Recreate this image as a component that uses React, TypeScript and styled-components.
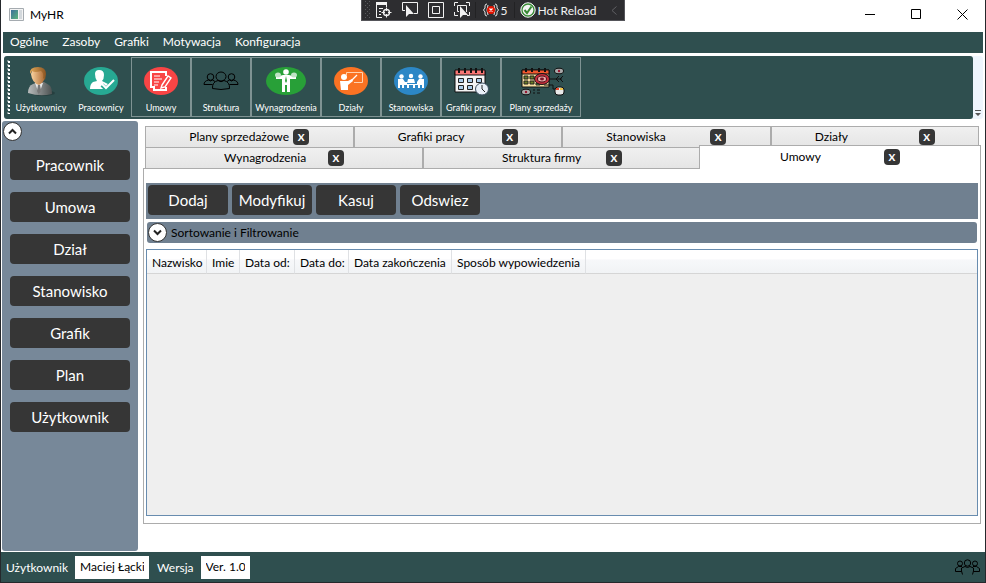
import React, { useState } from "react";
import styled, { createGlobalStyle } from "styled-components";

const slate = "#2f4f4f";
const steel = "#708090";
const dark = "#363636";
const line = "#acacac";

const GlobalStyle = createGlobalStyle`
  *, *::before, *::after { box-sizing: border-box; }
  body { margin: 0; background: #fff; }
  body, button, input { font-family: Lato, "Open Sans", sans-serif; font-size: 12px; color: #000; }
  button { padding: 0; border: 0; background: none; cursor: pointer; }
  svg { display: block; flex: none; }
`;

const Window = styled.div`
  position: relative;
  display: flex;
  flex-direction: column;
  min-height: 100vh;
  border: solid #25282c;
  border-width: 0 1px 1px;
`;

const TitleBar = styled.header`
  display: flex;
  align-items: center;
  height: 28px;
  margin-bottom: 4px;
  padding-left: 8px;
`;

const Title = styled.h1`
  flex: 1;
  margin: 0 0 0 6px;
  font-size: 12px;
  font-weight: 400;
`;

const CaptionButton = styled.button`
  display: grid;
  place-items: center;
  width: 46px;
  height: 28px;
`;

const DebugBar = styled.div`
  position: absolute;
  top: 0;
  left: 50%;
  transform: translateX(-50%);
  display: flex;
  align-items: center;
  width: 264px;
  height: 21px;
  padding: 0 6px 0 3px;
  background: #2d2d30;
  border: solid #55555a;
  border-width: 0 1px 1px;
`;

const DebugButton = styled.button<{ $width: number }>`
  display: flex;
  align-items: center;
  justify-content: center;
  gap: 2px;
  width: ${(p) => p.$width}px;
  height: 20px;
  color: #f1f1f1;
  white-space: nowrap;
`;

const DebugSeparator = styled.span`
  width: 1px;
  height: 16px;
  background: #222224;
`;

const MenuBar = styled.nav`
  display: flex;
  align-items: center;
  height: 21px;
  margin: 0 2px 3px;
  background: ${slate};
`;

const MenuItem = styled.button`
  height: 21px;
  padding: 0 7px 2px;
  color: #fff;
`;

const ToolStrip = styled.div`
  display: flex;
  height: 63px;
  margin: 0 2px 2px 3px;
  background: #eef5fd;
  border-radius: 3px;
`;

const ToolBar = styled.div`
  display: flex;
  align-items: flex-start;
  flex: 1;
  padding: 1px 0 0 3px;
  background: ${slate};
  border-radius: 3px;
`;

const Grip = styled.span`
  width: 4px;
  height: 54px;
  margin-top: 3px;
  background: repeating-linear-gradient(#fff 0 2px, transparent 2px 4px) 1px 1px / 2px 100% no-repeat,
    repeating-linear-gradient(#7d8f8f 0 2px, transparent 2px 4px) 0 0 / 2px 100% no-repeat;
`;

const ToolButton = styled.button<{ $wide?: number; $framed?: boolean }>`
  display: flex;
  flex-direction: column;
  align-items: center;
  justify-content: space-between;
  width: ${(p) => p.$wide ?? 60}px;
  height: 60px;
  padding: 9px 0 2px;
  border: 1px solid ${(p) => (p.$framed ? "#7f9393" : "transparent")};
  color: #fff;
  font-size: 9px;
  line-height: 12px;
  white-space: nowrap;
`;

const Overflow = styled.button`
  display: flex;
  align-items: flex-end;
  justify-content: center;
  width: 10px;
  padding-bottom: 2px;
`;

const Main = styled.main`
  display: flex;
  flex: 1;
  gap: 5px;
  padding: 0 4px 1px 1px;
`;

const SideBar = styled.aside`
  width: 136px;
  padding: 1px 8px;
  background: #778899;
  border-radius: 3px;
`;

const RoundButton = styled.button<{ $out?: boolean }>`
  display: grid;
  place-items: center;
  flex: none;
  width: 19px;
  height: 19px;
  margin-left: ${(p) => (p.$out ? "-7px" : "0")};
  background: #fff;
  border: 1px solid #333;
  border-radius: 50%;
`;

const SideList = styled.div`
  display: flex;
  flex-direction: column;
  gap: 12px;
  padding-top: 9px;
`;

const DarkButton = styled.button<{ $width?: number }>`
  width: ${(p) => (p.$width ? `${p.$width}px` : "100%")};
  height: 30px;
  background: ${dark};
  border-radius: 4px;
  color: #fff;
  font-size: 15px;
`;

const Content = styled.section`
  display: flex;
  flex: 1;
  flex-direction: column;
  min-width: 0;
  padding: 5px 0 27px;
`;

const TabRow = styled.div`
  display: grid;
  grid-auto-flow: column;
  grid-auto-columns: 1fr;
  height: 21px;
  padding: 0 2px;
`;

const Tab = styled.div<{ $selected?: boolean }>`
  position: relative;
  z-index: ${(p) => (p.$selected ? 1 : 0)};
  display: flex;
  align-items: center;
  justify-content: center;
  height: ${(p) => (p.$selected ? 24 : 21)}px;
  margin: ${(p) => (p.$selected ? "-2px -2px 0" : "0")};
  padding-bottom: ${(p) => (p.$selected ? 1 : 0)}px;
  background: ${(p) => (p.$selected ? "#fff" : "linear-gradient(#f0f0f0, #e5e5e5)")};
  border: 1px solid ${line};
  border-bottom: 0;
`;

const TabInner = styled.div`
  display: flex;
  align-items: center;
  justify-content: space-between;
  width: 120px;
`;

const TabLabel = styled.button`
  padding-bottom: 1px;
  white-space: nowrap;
`;

const TabClose = styled.button`
  width: 16px;
  height: 16px;
  background: ${dark};
  border-radius: 4px;
  color: #fff;
  font-size: 10px;
  font-weight: 900;
  line-height: 16px;
  text-transform: uppercase;
`;

const Panel = styled.div`
  display: flex;
  flex: 1;
  flex-direction: column;
  gap: 3px;
  padding: 14px 2px 7px;
  border: 1px solid ${line};
`;

const ActionBar = styled.div`
  display: flex;
  gap: 4px;
  height: 36px;
  padding: 2px;
  background: ${steel};
`;

const FilterBar = styled.div`
  display: flex;
  align-items: center;
  gap: 4px;
  height: 21px;
  margin: 0 1px 3px;
  padding-left: 1px;
  background: ${steel};
  border-radius: 3px;
`;

const GridBox = styled.div`
  flex: 1;
  background: #efefef;
  border: 1px solid #688caf;
`;

const Table = styled.table`
  width: 100%;
  border-collapse: separate;
  border-spacing: 0;
  table-layout: fixed;
`;

const HeaderCell = styled.th<{ $width?: number }>`
  width: ${(p) => (p.$width ? `${p.$width}px` : "auto")};
  height: 24px;
  padding: 2px 0 0 5px;
  background: linear-gradient(#fff 0 40%, #f7f8fa 42%, #f1f3f5);
  border-bottom: 1px solid #d5d5d5;
  border-right: ${(p) => (p.$width ? "1px solid #dfe1e4" : "0")};
  font-weight: 400;
  text-align: left;
  white-space: nowrap;
`;

const StatusBar = styled.footer`
  display: flex;
  align-items: center;
  height: 30px;
  padding: 0 5px;
  background: ${slate};
  color: #fff;
`;

const StatusField = styled.label`
  display: flex;
  align-items: center;
  gap: 7px;
  margin-right: 8px;
`;

const StatusInput = styled.input<{ $width: number }>`
  width: ${(p) => p.$width}px;
  height: 23px;
  padding: 0 5px 1px;
  border: 0;
  background: #fff;
`;

const Push = styled.span`
  margin-left: auto;
`;

const UserIcon = () => (
  <svg width="30" height="30" viewBox="0 0 30 30">
    <defs>
      <linearGradient id="skin" x1="0" x2="1">
        <stop offset="0" stopColor="#fbd3a0" />
        <stop offset="1" stopColor="#a9662f" />
      </linearGradient>
      <linearGradient id="hair" x1="0" x2="1">
        <stop offset="0" stopColor="#e3a95a" />
        <stop offset="1" stopColor="#8a5422" />
      </linearGradient>
      <linearGradient id="suit" x1="0" x2="1">
        <stop offset="0" stopColor="#b9bcbc" />
        <stop offset="1" stopColor="#4c5252" />
      </linearGradient>
    </defs>
    <ellipse cx="17" cy="26" rx="12" ry="3" fill="#263f3f" />
    <path d="M2 26Q2 19 7 17L12 15H18L23 18Q26 20 26 27Q14 30 2 26Z" fill="url(#suit)" />
    <path d="M9 16L13 27L17 16Z" fill="#e6e8e8" />
    <path d="M12 18L11 24L13 28L15 23L14 18Z" fill="#777" />
    <path d="M5 7Q6 1 12 1Q19 1 19 8Q19 15 13 18Q6 16 5 7Z" fill="url(#skin)" />
    <path d="M4 7Q3 0 12 0Q20 0 20 7L19 13L17 11Q18 6 15 4Q9 6 6 4Z" fill="url(#hair)" />
  </svg>
);

const WorkerIcon = () => (
  <svg width="34" height="28" viewBox="0 0 34 28">
    <ellipse cx="17" cy="14" rx="17" ry="14" fill="#27a993" />
    <path d="M11 7Q11 3 15 3Q20 3 20 8Q20 12 18 14L24 17L22 22H6Q6 17 9 15L13 14Q11 11 11 7Z" fill="#fff" />
    <path d="M18 18L22 22L30 14" fill="none" stroke="#27a993" strokeWidth="4" />
    <path d="M18 17L22 21L30 13" fill="none" stroke="#fff" strokeWidth="2" />
  </svg>
);

const ContractIcon = () => (
  <svg width="34" height="28" viewBox="0 0 34 28">
    <ellipse cx="17" cy="14" rx="17" ry="14" fill="#f94545" />
    <path d="M22 9V5H7V20H10V23H22V20" fill="none" stroke="#fff" strokeWidth="2" />
    <path d="M10 9H16M10 12H18M10 15H15M10 18H14" stroke="#fff" strokeWidth="1" />
    <path d="M18 18L24 9L27 11L21 20L17 21Z" fill="#f94545" stroke="#fff" strokeWidth="1.4" />
  </svg>
);

const PeopleIcon = () => (
  <svg width="36" height="28" viewBox="0 0 36 28" fill="none" stroke="#000" strokeWidth="1">
    <ellipse cx="18" cy="9.500" rx="5" ry="4.500" />
    <path d="M9.500 21.500Q9 15 15 13.500Q18 16 21 13.500Q27 15 26.500 21.500Q18 23.500 9.500 21.500Z" />
    <circle cx="7.500" cy="10" r="3.300" />
    <circle cx="28.500" cy="10" r="3.300" />
    <path d="M9.500 17.500H1Q1 14 5.500 13Q7.500 15 9.500 13L12 14.500M26.500 17.500H35Q35 14 30.500 13Q28.500 15 26.500 13L24 14.500" />
  </svg>
);

const StatusPeopleIcon = () => (
  <svg width="25" height="16" viewBox="0 0 25 16" fill="none" stroke="#000" strokeWidth="1">
    <circle cx="12.500" cy="4" r="3.200" />
    <circle cx="5" cy="4.500" r="2.500" />
    <circle cx="20" cy="4.500" r="2.500" />
    <path d="M7.500 15.500L6.500 12V9L10 7.500L12.500 8.500L15 7.500L18.500 9V12L17.500 15.500M6.500 12.500H.5V9.500L3.500 7.500H7M18.500 12.500H24.500V9.500L21.500 7.500H18" />
  </svg>
);

const SalaryIcon = () => (
  <svg width="40" height="28" viewBox="0 0 40 28">
    <ellipse cx="20" cy="14" rx="20" ry="14" fill="#28a038" />
    <circle cx="20" cy="5" r="2.800" fill="#fff" />
    <path d="M10 10L17 8H23L30 10V12L24 12V25H21V18H19V25H16V12L10 12Z" fill="#fff" />
    <ellipse cx="12" cy="8" rx="3" ry="2.500" fill="#bfe3c4" />
    <ellipse cx="28" cy="8" rx="3" ry="2.500" fill="#bfe3c4" />
    <path d="M20 9L19 14L20 16L21 14Z" fill="#28a038" />
  </svg>
);

const DepartmentIcon = () => (
  <svg width="34" height="28" viewBox="0 0 34 28">
    <ellipse cx="17" cy="14" rx="17" ry="14" fill="#fb7323" />
    <path d="M12.500 8V5.500H28.500V15.500H20" fill="none" stroke="#ffd2b0" strokeWidth="1" />
    <circle cx="10" cy="10" r="3" fill="#fff" />
    <path d="M6 14H14L18 12L19 14L14 18V23H7Z" fill="#fff" />
    <path d="M17 14L23 8" stroke="#fff" strokeWidth="1.200" />
  </svg>
);

const PositionIcon = () => (
  <svg width="34" height="28" viewBox="0 0 34 28" fill="#fff">
    <ellipse cx="17" cy="14" rx="17" ry="14" fill="#2c87c6" />
    <circle cx="17" cy="9" r="2.200" />
    <circle cx="7.500" cy="9.500" r="2.200" />
    <circle cx="26.500" cy="9.500" r="2.200" />
    <path d="M14 12H20L21 16H13ZM4 12H9L11 15H13V17H23V15L25 12H30V21H28V18H26V21H24V18H21V21H19V18H15V21H13V18H10V21H8V18H6V21H4Z" />
  </svg>
);

const ScheduleIcon = () => (
  <svg width="36" height="29" viewBox="0 0 36 29">
    <path d="M2 4H32V25H2Z" fill="#f4f4f4" stroke="#111" />
    <path d="M2 3H32V8H2Z" fill="#f87674" stroke="#111" />
    <path d="M6 1V6M12 1V6M18 1V6M23 1V6M29 1V6" stroke="#111" strokeWidth="2" />
    <path d="M5.500 11.500H10.500V15.500H5.500ZM14.500 11.500H19.500V15.500H14.500ZM23.500 11.500H28.500V15.500H23.500ZM5.500 18.500H10.500V22.500H5.500ZM14.500 18.500H19.500V22.500H14.500Z" fill="#a9cbe8" stroke="#222" />
    <ellipse cx="29" cy="22" rx="6.500" ry="6" fill="#e8f0f8" stroke="#3b4e60" />
    <path d="M29 18V22L32 25" fill="none" stroke="#222" />
  </svg>
);

const SalesIcon = () => (
  <svg width="54" height="29" viewBox="-6 0 54 29">
    <path d="M2 3H29V20H2Z" fill="#f6dfa0" stroke="#111" />
    <path d="M2 3H29V7H2Z" fill="#f1582e" stroke="#111" />
    <path d="M6 1V5M12 1V5M19 1V5M25 1V5" stroke="#111" strokeWidth="2" />
    <path d="M4 9H8V12H4ZM10 9H14V12H10ZM4 14H8V17H4ZM10 14H14V17H10Z" fill="#6b7e25" stroke="#222" />
    <path d="M16 16H20V18H16Z" fill="#55a03c" stroke="#222" />
    <path d="M29 12H42M39 9L36 12L39 15M43 9L40 12L43 15M24 18H33V22H36" fill="none" stroke="#111" />
    <ellipse cx="22" cy="12" rx="7.500" ry="5.500" fill="#c72e3c" stroke="#151515" />
    <ellipse cx="22" cy="12" rx="4.500" ry="3" fill="#e8a9a8" stroke="#4a1018" />
    <ellipse cx="22" cy="12" rx="2" ry="1.400" fill="#7d1528" />
    <ellipse cx="39" cy="4" rx="4.500" ry="2.800" fill="#aaa" stroke="#111" />
    <circle cx="39" cy="4" r="1.200" fill="#9b1630" />
    <ellipse cx="6" cy="25" rx="4.500" ry="2.800" fill="#aaa" stroke="#111" />
    <circle cx="6" cy="25" r="1.200" fill="#9b1630" />
    <path d="M13 23H15M17 23H20M13 26H15M17 26H20" stroke="#111" />
    <rect x="35" y="20" width="9" height="8" rx="3" fill="#e9e9e9" stroke="#111" />
    <path d="M36 21H39V23H36Z" fill="#e5482c" />
    <path d="M40 21H43V23H40Z" fill="#f3c84a" />
  </svg>
);

const Chevron = ({ up }: { up?: boolean }) => (
  <svg width="9" height="7" viewBox="0 0 9 7" fill="none" stroke="#222" strokeWidth="2">
    <path d={up ? "M1 5.500L4.500 2L8 5.500" : "M1 1.500L4.500 5L8 1.500"} />
  </svg>
);

const AppIcon = () => (
  <svg width="15" height="13" viewBox="0 0 15 13">
    <defs>
      <linearGradient id="pane" x2="1" y2="1">
        <stop offset="0" stopColor="#3c6f9c" />
        <stop offset="1" stopColor="#5bb57b" />
      </linearGradient>
    </defs>
    <path d="M.5.5H14.5V12.500H.5Z" fill="#f3f3f3" stroke="#a5abb0" />
    <path d="M2 2H9V11H2Z" fill="url(#pane)" />
    <path d="M10 2H13V11H10Z" fill="#d3d8dc" />
  </svg>
);

const DebugGrip = () => (
  <svg width="6" height="18" viewBox="0 0 6 18" fill="#5a5a5e">
    {[0, 4, 8, 12, 16].map((y) => (
      <path key={y} d={`M0 ${y}h1v1h-1zM4 ${y}h1v1h-1zM2 ${y + 2}h1v1h-1z`} />
    ))}
  </svg>
);

const LiveTreeIcon = () => (
  <svg width="16" height="16" viewBox="0 0 16 16" fill="none" stroke="#f1f1f1">
    <path d="M0 1.500H11" strokeWidth="3" />
    <path d="M.5 3V15.500H6M10.500 3V5M3 6.500H7M3 9.500H5M3 12.500H5" />
    <circle cx="10.500" cy="10.500" r="3" strokeWidth="1.400" />
    <path d="M10.500 5.500V9M10.500 12V15.500M5.500 10.500H9M12 10.500H15.500" />
  </svg>
);

const SelectIcon = () => (
  <svg width="16" height="16" viewBox="0 0 16 16">
    <path d="M3 8.500H.5V.5H15.500V11.500H12" fill="none" stroke="#f1f1f1" />
    <path d="M4 3V15L7 12L12 12Z" fill="#f1f1f1" />
  </svg>
);

const AdornerIcon = () => (
  <svg width="16" height="16" viewBox="0 0 16 16" fill="none" stroke="#f1f1f1">
    <path d="M.5.5H15.500V15.500H.5ZM4.500 4.500H11.500V11.500H4.500Z" />
  </svg>
);

const TrackIcon = () => (
  <svg width="16" height="16" viewBox="0 0 16 16">
    <path d="M.5 4V.5H4M12 .5H15.500V4M15.500 10V13.500H13M4 13.500H.5V10M5 9.500H3.500V3.500H12.500V10" fill="none" stroke="#f1f1f1" />
    <path d="M6 4V16L9 13L14 13Z" fill="#f1f1f1" />
  </svg>
);

const ErrorIcon = () => (
  <svg width="16" height="14" viewBox="0 0 16 14" fill="none">
    <path d="M4 1Q2 1 2 3V5L.5 7L2 9V11Q2 13 4 13M12 1Q14 1 14 3V5L15.500 7L14 9V11Q14 13 12 13M5 2Q3 7 5 12M11 2Q13 7 11 12" stroke="#e8e8e8" />
    <circle cx="8" cy="7" r="4" fill="#e51400" />
    <path d="M6.500 5.500L9.500 8.500M9.500 5.500L6.500 8.500" stroke="#fff" strokeWidth="1.200" />
  </svg>
);

const CheckIcon = () => (
  <svg width="16" height="16" viewBox="0 0 16 16">
    <circle cx="8" cy="8" r="7.200" fill="#f4f4f4" stroke="#f4f4f4" />
    <circle cx="8" cy="8" r="6" fill="none" stroke="#388a34" strokeWidth="1.300" />
    <path d="M4.500 8L7 11L11.500 4.500" fill="none" stroke="#388a34" strokeWidth="2" />
  </svg>
);

const menu = ["Ogólne", "Zasoby", "Grafiki", "Motywacja", "Konfiguracja"];

const tools = [
  { label: "Użytkownicy", icon: <UserIcon /> },
  { label: "Pracownicy", icon: <WorkerIcon /> },
  { label: "Umowy", icon: <ContractIcon />, framed: true },
  { label: "Struktura", icon: <PeopleIcon />, framed: true },
  { label: "Wynagrodzenia", icon: <SalaryIcon />, framed: true, wide: 70 },
  { label: "Działy", icon: <DepartmentIcon />, framed: true },
  { label: "Stanowiska", icon: <PositionIcon />, framed: true },
  { label: "Grafiki pracy", icon: <ScheduleIcon />, framed: true },
  { label: "Plany sprzedaży", icon: <SalesIcon />, framed: true, wide: 80 },
];

const shortcuts = ["Pracownik", "Umowa", "Dział", "Stanowisko", "Grafik", "Plan", "Użytkownik"];

const tabRows = [
  ["Plany sprzedażowe", "Grafiki pracy", "Stanowiska", "Działy"],
  ["Wynagrodzenia", "Struktura firmy", "Umowy"],
];

const actions = ["Dodaj", "Modyfikuj", "Kasuj", "Odswiez"];

const columns = [
  { label: "Nazwisko", width: 60 },
  { label: "Imie", width: 33 },
  { label: "Data od:", width: 55 },
  { label: "Data do:", width: 54 },
  { label: "Data zakończenia", width: 103 },
  { label: "Sposób wypowiedzenia", width: 134 },
];

export default function App() {
  const [selected, setSelected] = useState("Umowy");

  return (
    <Window>
      <GlobalStyle />
      <TitleBar>
        <AppIcon />
        <Title>MyHR</Title>
        <CaptionButton aria-label="Minimalizuj">
          <svg width="11" height="11" stroke="#000"><path d="M0 5.500H10" /></svg>
        </CaptionButton>
        <CaptionButton aria-label="Maksymalizuj">
          <svg width="11" height="11" stroke="#000" fill="none"><path d="M.5.5H9.500V9.500H.5Z" /></svg>
        </CaptionButton>
        <CaptionButton aria-label="Zamknij">
          <svg width="11" height="11" stroke="#000"><path d="M.5.5L10.500 10.500M10.500.5L.5 10.500" /></svg>
        </CaptionButton>
      </TitleBar>

      <DebugBar>
        <DebugGrip />
        <DebugButton $width={26} aria-label="Drzewo wizualne"><LiveTreeIcon /></DebugButton>
        <DebugButton $width={26} aria-label="Wybierz element"><SelectIcon /></DebugButton>
        <DebugButton $width={26} aria-label="Obramowania"><AdornerIcon /></DebugButton>
        <DebugButton $width={26} aria-label="Śledź fokus"><TrackIcon /></DebugButton>
        <DebugSeparator />
        <DebugButton $width={38}><ErrorIcon />5</DebugButton>
        <DebugSeparator />
        <DebugButton $width={86}><CheckIcon />Hot Reload</DebugButton>
        <Push>
          <DebugButton $width={8} aria-label="Zwiń">
            <svg width="6" height="9" fill="none" stroke="#5f5f63"><path d="M5.500.5L1 4.500L5.500 8.500" /></svg>
          </DebugButton>
        </Push>
      </DebugBar>

      <MenuBar>
        {menu.map((m) => <MenuItem key={m}>{m}</MenuItem>)}
      </MenuBar>

      <ToolStrip>
        <ToolBar>
          <Grip />
          {tools.map((t) => (
            <ToolButton key={t.label} $wide={t.wide} $framed={t.framed}>
              {t.icon}
              <span>{t.label}</span>
            </ToolButton>
          ))}
        </ToolBar>
        <Overflow aria-label="Więcej">
          <svg width="6" height="7" viewBox="0 0 6 7" fill="#555"><path d="M0 0H6V1H0ZM0 3H6L3 6Z" /></svg>
        </Overflow>
      </ToolStrip>

      <Main>
        <SideBar>
          <RoundButton $out aria-label="Zwiń menu"><Chevron up /></RoundButton>
          <SideList>
            {shortcuts.map((s) => <DarkButton key={s}>{s}</DarkButton>)}
          </SideList>
        </SideBar>
        <Content>
          {tabRows.map((row) => (
            <TabRow key={row[0]}>
              {row.map((t) => (
                <Tab key={t} $selected={t === selected}>
                  <TabInner>
                    <TabLabel onClick={() => setSelected(t)}>{t}</TabLabel>
                    <TabClose aria-label={`Zamknij ${t}`}>x</TabClose>
                  </TabInner>
                </Tab>
              ))}
            </TabRow>
          ))}
          <Panel>
            <ActionBar>
              {actions.map((a) => <DarkButton key={a} $width={80}>{a}</DarkButton>)}
            </ActionBar>
            <FilterBar>
              <RoundButton id="filter" aria-label="Rozwiń"><Chevron /></RoundButton>
              <label htmlFor="filter">Sortowanie i Filtrowanie</label>
            </FilterBar>
            <GridBox>
              <Table>
                <thead>
                  <tr>
                    {columns.map((c) => (
                      <HeaderCell key={c.label} $width={c.width} scope="col">{c.label}</HeaderCell>
                    ))}
                    <HeaderCell as="td" />
                  </tr>
                </thead>
              </Table>
            </GridBox>
          </Panel>
        </Content>
      </Main>

      <StatusBar>
        <StatusField>Użytkownik<StatusInput $width={74} defaultValue="Maciej Łącki" /></StatusField>
        <StatusField>Wersja<StatusInput $width={49} defaultValue="Ver. 1.0" /></StatusField>
        <Push><StatusPeopleIcon /></Push>
      </StatusBar>
    </Window>
  );
}
